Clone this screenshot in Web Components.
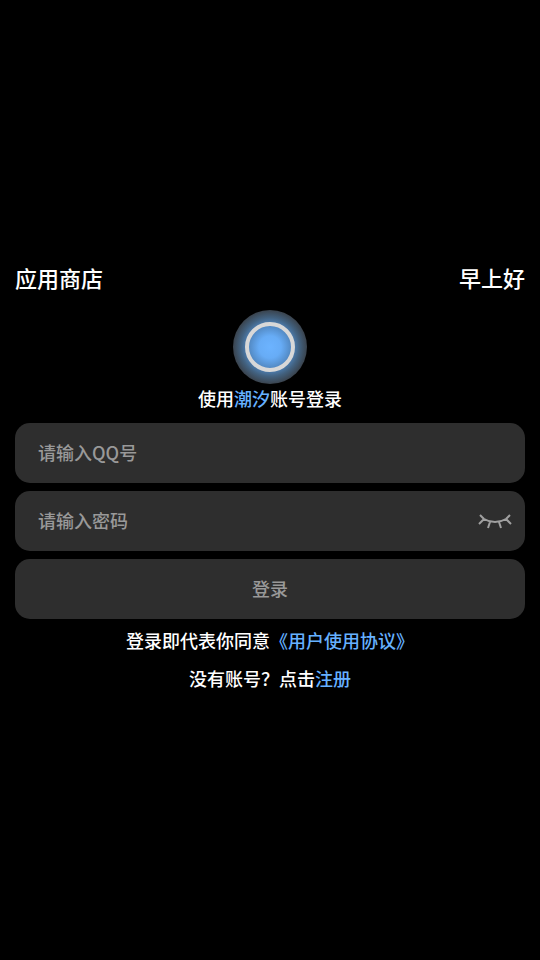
<!DOCTYPE html>
<html lang="zh-CN">
<head>
<meta charset="utf-8">
<meta name="viewport" content="width=device-width, initial-scale=1">
<title>应用商店</title>
<style>
html,body{margin:0;min-height:100%;background:#000}
body{font-family:"Noto Sans CJK SC",sans-serif;font-weight:500;color:#fff;font-size:18px;line-height:26px}
</style>
</head>
<body>
<login-page></login-page>
<script>
const define=(name,html,setup)=>customElements.define(name,class extends HTMLElement{
  connectedCallback(){
    if(this.shadowRoot)return;
    const root=this.attachShadow({mode:'open'});
    root.innerHTML=html;
    if(setup)setup(root,this);
  }
});
define('page-header',`<style>
:host{display:flex;justify-content:space-between;align-items:center}
h1,p{margin:0;font-size:22px;line-height:32px;font-weight:inherit}
</style><h1><slot name="title"></slot></h1><p><slot name="greeting"></slot></p>`);
define('brand-mark',`<style>
:host{display:block;width:76px;height:76px}svg{display:block}
</style><svg width="76" height="76" viewBox="0 0 76 76" aria-hidden="true">
<defs><radialGradient id="g"><stop offset="0" stop-color="#6cb3ff"/><stop offset=".3" stop-color="#67acf6"/><stop offset=".6" stop-color="#5085bd"/><stop offset=".8" stop-color="#42617f"/><stop offset="1" stop-color="#3a434d"/></radialGradient></defs>
<circle cx="38" cy="38" r="37" fill="url(#g)"/><circle cx="38" cy="38" r="23" fill="none" stroke="#d8d8d8" stroke-width="4"/></svg>`);
define('text-field',`<style>
:host{display:flex;align-items:center;background:#2e2e2e;border-radius:15px;height:60px;box-sizing:border-box;padding:0 13px 0 23px}
input{flex:1;min-width:0;height:100%;box-sizing:border-box;padding:0 0 2px;border:0;outline:0;background:none;color:#fff;font:inherit}
input::placeholder{color:#999;opacity:1}
</style><input><slot></slot>`,(root,host)=>{
  const i=root.querySelector('input');
  i.type=host.getAttribute('type')||'text';
  i.placeholder=host.getAttribute('label');
  i.setAttribute('aria-label',host.getAttribute('label'));
});
define('eye-toggle',`<style>
:host{display:block}button{display:block;padding:0;border:0;background:none;color:#a0a0a0}svg{display:block}
</style><button type="button" aria-label="显示密码"><svg width="34" height="20" viewBox="0 0 34 20" fill="none" stroke="currentColor" stroke-width="2" stroke-linejoin="round"><path d="M2 4L6 8Q11 11 17 11Q23 11 28 8L32 4M6 8L1 13M12 11L10 17M21 11L23 17M28 8L33 13"/></svg></button>`);
define('submit-button',`<style>
:host{display:block}button{display:block;width:100%;height:60px;padding:0 0 2px;border:0;border-radius:15px;background:#2e2e2e;color:#999;font:inherit}
</style><button type="submit"><slot></slot></button>`);
define('text-line',`<style>
:host{display:block;text-align:center}
::slotted(a),::slotted(span){color:#66b1ff;text-decoration:none}
</style><slot></slot>`);
define('login-page',`<style>
:host{display:flex;flex-direction:column;justify-content:center;min-height:100vh;box-sizing:border-box;padding:0 15px 8px}
brand-mark{align-self:center;margin-top:16px}
form{display:grid;gap:8px;margin:12px 0 8px}
.register{margin-top:12px}
</style>
<page-header><span slot="title">应用商店</span><span slot="greeting">早上好</span></page-header>
<brand-mark></brand-mark>
<text-line>使用<span>潮汐</span>账号登录</text-line>
<form><text-field label="请输入QQ号"></text-field>
<text-field type="password" label="请输入密码"><eye-toggle></eye-toggle></text-field>
<submit-button>登录</submit-button></form>
<text-line>登录即代表你同意<a href="#terms">《用户使用协议》</a></text-line>
<text-line class="register">没有账号？点击<a href="#register">注册</a></text-line>`);
</script>
</body>
</html>
